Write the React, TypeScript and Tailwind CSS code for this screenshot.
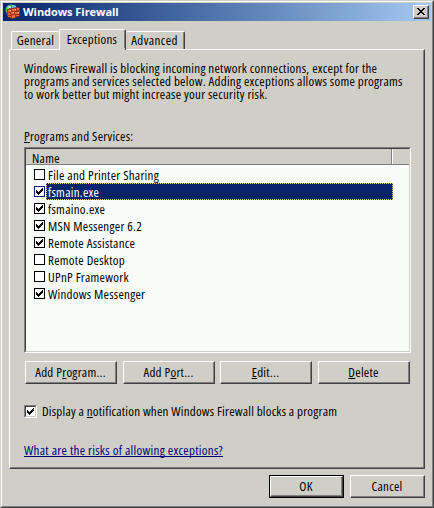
import React from "react";

const CHECK_PATH = "M0 2h1v3h-1zM1 3h1v3h-1zM2 4h1v3h-1zM3 3h1v3h-1zM4 2h1v3h-1zM5 1h1v3h-1zM6 0h1v3h-1z";

function Check() {
  return (
    <svg width="7" height="7" viewBox="0 0 7 7" shapeRendering="crispEdges" aria-hidden="true">
      <path d={CHECK_PATH} fill="#000" />
    </svg>
  );
}

function FirewallIcon() {
  return (
    <svg className="ml-[2px] mt-px shrink-0" width="16" height="16" viewBox="0 0 16 16" aria-hidden="true">
      <circle cx="6" cy="6" r="5.8" fill="#2878c8" />
      <path d="M1 4L4 1L8 1L6 4L5 7L2 9L1 7Z" fill="#45b83d" />
      <path d="M3 2h3v2h-2v1h-2z" fill="#a4e8cc" />
      <path d="M7 1h3l2 3h-5z" fill="#5cc4ec" />
      <path d="M2 5L12 3L15 4V12L7 15L2 12Z" fill="#a03418" />
      <path d="M3 6h3v2h-3zM7 5h4v2h-4zM12 4h2v2h-2zM3 9h2v2h-2zM6 8h3v2h-3zM10 8h4v2h-4zM3 12h3v1h-3zM7 11h3v3h-3zM11 11h3v1h-3z" fill="#f16a38" />
      <path d="M5 6h1v1h-1zM10 5h1v1h-1zM8 8h1v1h-1zM13 8h1v1h-1z" fill="#ffc48a" />
    </svg>
  );
}

const programs = [
  { name: "File and Printer Sharing", on: false },
  { name: "fsmain.exe", on: true, selected: true },
  { name: "fsmaino.exe", on: true },
  { name: "MSN Messenger 6.2", on: true },
  { name: "Remote Assistance", on: true },
  { name: "Remote Desktop", on: false },
  { name: "UPnP Framework", on: false },
  { name: "Windows Messenger", on: true },
];

function Button({ children, primary, className = "" }: { children: React.ReactNode; primary?: boolean; className?: string }) {
  return (
    <button className={`h-[23px] shrink-0 bg-[#d0cfc7] ${primary ? "border border-black" : ""} ${className}`}>
      <span className="block h-full border border-t-white border-l-white border-r-[#404040] border-b-[#404040]">
        <span className="flex h-full items-center justify-center border-r border-b border-[#808080] whitespace-nowrap">
          <span>{children}</span>
        </span>
      </span>
    </button>
  );
}

function Key({ children }: { children: string }) {
  return <span className="underline decoration-1 underline-offset-[1px] [text-decoration-skip-ink:none]">{children}</span>;
}

function Tab({ label, className }: { label: string; className: string }) {
  return (
    <div className={`rounded-t-[2px] border-t border-l border-r border-t-white border-l-white border-r-[#404040] bg-[#d0cfc7] ${className}`}>
      <div className="flex h-full items-center justify-center border-r border-[#808080] whitespace-nowrap">{label}</div>
    </div>
  );
}

export default function App() {
  return (
    <div className="flex h-[508px] w-[434px] flex-col border border-t-[#d0cfc7] border-l-[#d0cfc7] border-r-[#404040] border-b-[#404040] bg-[#d0cfc7] font-['Open_Sans',sans-serif] [font-stretch:75%] text-[13px] leading-[13px] tracking-[0.26px] text-black">
      <div className="flex h-full flex-col border border-t-white border-l-white border-r-[#808080] border-b-[#808080] p-px">
        <div className="flex h-[18px] shrink-0 bg-linear-to-r from-[#0a246a] to-[#a6caf0]">
          <FirewallIcon />
          <div className="ml-[2px] flex-1 whitespace-nowrap [font-stretch:100%] text-[11px] leading-[18px] font-bold tracking-[-0.05px] text-white">Windows Firewall</div>
          <div className="mt-[2px] mr-[2px] h-[14px] w-[16px] border border-t-white border-l-white border-r-[#404040] border-b-[#404040] bg-[#d0cfc7]">
            <div className="flex h-full items-start border-r border-b border-[#808080]">
              <svg className="mt-[2px] ml-[3px]" width="8" height="7" viewBox="0 0 8 7" shapeRendering="crispEdges" aria-hidden="true">
                <path d="M0 0h2v1h-2zM6 0h2v1h-2zM1 1h2v1h-2zM5 1h2v1h-2zM2 2h4v1h-4zM3 3h2v1h-2zM2 4h4v1h-4zM1 5h2v1h-2zM5 5h2v1h-2zM0 6h2v1h-2zM6 6h2v1h-2z" fill="#000" />
              </svg>
            </div>
          </div>
        </div>

        <div className="relative z-10 mt-[8px] -mb-px ml-[8px] flex h-[21px] shrink-0 items-start">
          <Tab label="General" className="mt-[2px] h-[18px] w-[48px] border-r-0 [&>div]:border-r-0" />
          <Tab label="Exceptions" className="h-[21px] w-[67px] pb-[2px]" />
          <Tab label="Advanced" className="mt-[2px] h-[18px] w-[59px] border-l-0 tracking-[0.4px]" />
        </div>

        <div className="ml-[6px] h-[420px] w-[416px] shrink-0 border border-t-white border-l-white border-r-[#404040] border-b-[#404040]">
          <div className="flex h-full flex-col border-r border-b border-[#808080] pl-[14px]">
            <div className="mt-[12px] whitespace-nowrap">
              <p>Windows Firewall is blocking incoming network connections, except for the</p>
              <p>programs and services selected below. Adding exceptions allows some programs</p>
              <p>to work better but might increase your security risk.</p>
            </div>
            <div className="mt-[29px]"><Key>P</Key>rograms and Services:</div>

            <div className="mt-[4px] h-[206px] w-[387px] shrink-0 border border-t-[#808080] border-l-[#808080] border-r-white border-b-white">
              <div className="h-full border border-t-[#404040] border-l-[#404040] border-r-[#d0cfc7] border-b-[#d0cfc7] bg-[#f8fdf9]">
                <div className="flex h-[16px] border-b border-[#808080] bg-[#d0cfc7]">
                  <div className="w-[366px] border-r border-[#808080] pl-[6px] leading-[18px]">Name</div>
                  <div className="w-px bg-white" />
                </div>
                <div className="pt-px">
                  {programs.map((p) => (
                    <div key={p.name} className="flex h-[17px] items-center pl-[8px]">
                      <div className={`flex h-[11px] w-[11px] shrink-0 items-center justify-center border bg-white ${p.selected ? "border-[#0a246a]" : "border-black"}`}>
                        {p.on && <Check />}
                      </div>
                      <div className={`ml-px h-[17px] whitespace-nowrap ${p.selected ? "w-[347px] border border-dotted border-[#e8dc90] bg-[#08246a] pl-px leading-[16px] text-white" : "pl-[2px] leading-[18px]"}`}>
                        {p.name}
                      </div>
                    </div>
                  ))}
                </div>
              </div>
            </div>

            <div className="mt-[8px] ml-px flex">
              <Button className="w-[92px]">Add P<Key>r</Key>ogram...</Button>
              <Button className="ml-[6px] w-[92px]">Add P<Key>o</Key>rt...</Button>
              <Button className="ml-[5px] w-[92px]"><Key>E</Key>dit...</Button>
              <Button className="ml-[6px] w-[92px]"><Key>D</Key>elete</Button>
            </div>

            <div className="mt-[21px] flex h-[13px] items-center">
              <div className="h-[13px] w-[13px] shrink-0 border border-t-[#808080] border-l-[#808080] border-r-white border-b-white">
                <div className="flex h-full items-center justify-center border border-t-[#404040] border-l-[#404040] border-r-[#d0cfc7] border-b-[#d0cfc7] bg-white">
                  <Check />
                </div>
              </div>
              <div className="ml-[5px] tracking-[0.22px] whitespace-nowrap">Display a <Key>n</Key>otification when Windows Firewall blocks a program</div>
            </div>

            <a className="mt-[26px] self-start tracking-[0.3px] whitespace-nowrap text-[#000080] underline decoration-1 underline-offset-[1px] [text-decoration-skip-ink:none]">What are the risks of allowing exceptions?</a>
          </div>
        </div>

        <div className="mt-[6px] mr-[6px] flex justify-end gap-[6px]">
          <Button primary className="w-[75px]">OK</Button>
          <Button className="w-[75px]">Cancel</Button>
        </div>
      </div>
    </div>
  );
}
